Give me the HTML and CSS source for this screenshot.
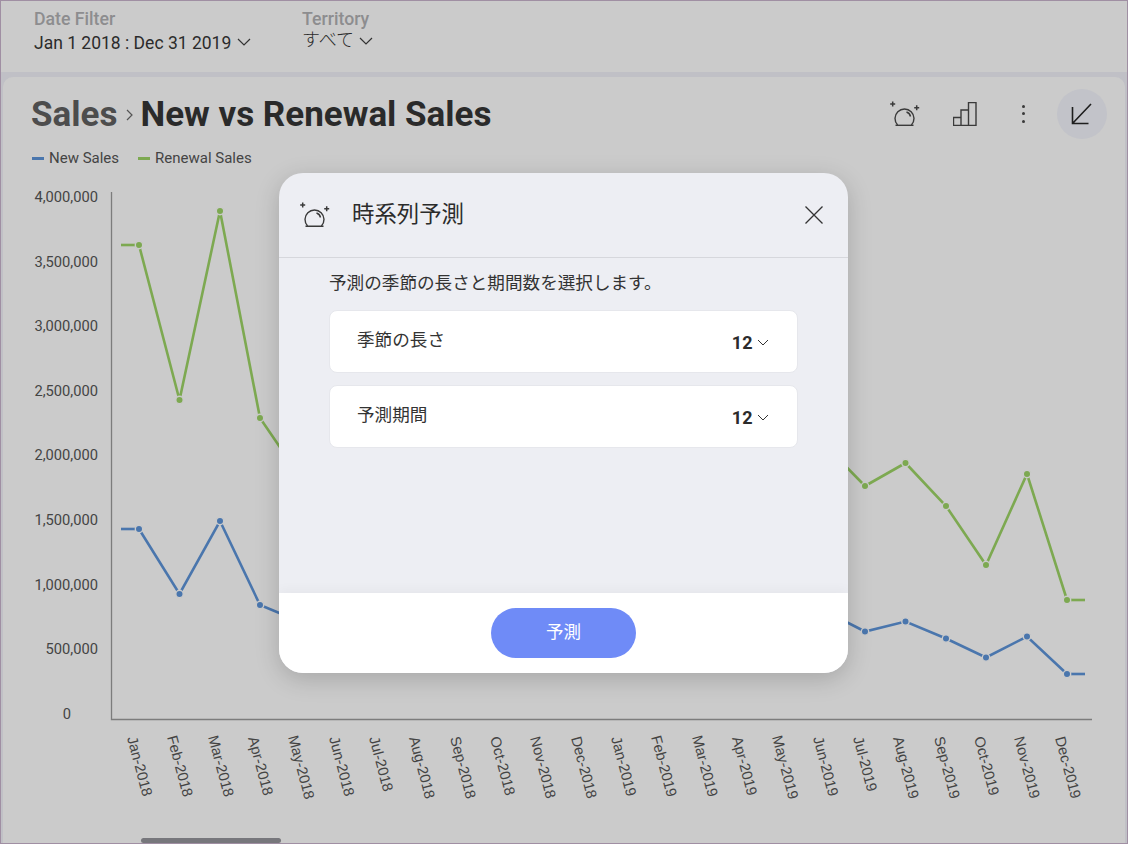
FILE: index.html
```html
<!DOCTYPE html>
<html lang="ja">
<head>
  <meta charset="UTF-8" />
  <title>New vs Renewal Sales</title>
  <link rel="stylesheet" href="styles.css">
</head>
<body>
  <div class="app">
    <div class="filters">
      <div class="filter filter-date">
        <div class="filter-label">Date Filter</div>
        <div class="filter-value">Jan 1 2018 : Dec 31 2019
          <svg class="chev" width="14" height="8" viewBox="0 0 14 8"><path d="M1 1l6 6 6-6"/></svg>
        </div>
      </div>
      <div class="filter">
        <div class="filter-label">Territory</div>
        <div class="filter-value filter-jp">すべて
          <svg class="chev" width="14" height="8" viewBox="0 0 14 8"><path d="M1 1l6 6 6-6"/></svg>
        </div>
      </div>
    </div>

    <div class="panel">
      <div class="panel-head">
        <div class="crumbs">
          <span class="crumb-parent">Sales</span>
          <svg class="crumb-sep" width="8" height="12" viewBox="0 0 8 12"><path d="M1 1l5 5-5 5"/></svg>
          <span class="crumb-title">New vs Renewal Sales</span>
        </div>
        <div class="actions">
          <svg class="icon icon-forecast" width="30" height="26" viewBox="0 0 30 26">
            <path d="M7.600 24A9.500 9.500 0 1 1 21.400 24"/>
            <path d="M5.500 24.300h18"/>
            <path d="M16.500 11a6 6 0 0 1 4 4.500"/>
            <path class="spark" d="M2.700 .5v5M.2 3h5M26.700 4.200v5M24.200 6.700h5"/>
          </svg>
          <svg class="icon icon-bars" width="24" height="24" viewBox="0 0 24 24">
            <path d="M.5 23.500v-8h7.500v8zM8 23.500v-15.500h7.500v15.500zM15.500 23.500v-23h7.500v23z"/>
          </svg>
          <div class="kebab"><i></i><i></i><i></i></div>
          <div class="collapse">
            <svg class="icon" width="22" height="22" viewBox="0 0 22 22">
              <path d="M20 1L1.500 20.500M1.500 4v16.500h16"/>
            </svg>
          </div>
        </div>
      </div>

      <div class="legend">
        <span class="legend-item"><i class="swatch swatch-blue"></i>New Sales</span>
        <span class="legend-item"><i class="swatch swatch-green"></i>Renewal Sales</span>
      </div>

      <svg class="chart" width="1122" height="662" viewBox="3 180 1122 662">
        <g class="y-labels">
          <text x="98" y="202">4,000,000</text>
          <text x="98" y="266.500">3,500,000</text>
          <text x="98" y="331">3,000,000</text>
          <text x="98" y="395.500">2,500,000</text>
          <text x="98" y="460">2,000,000</text>
          <text x="98" y="525">1,500,000</text>
          <text x="98" y="589.500">1,000,000</text>
          <text x="98" y="654">500,000</text>
          <text x="71" y="719">0</text>
        </g>
        <path class="axis" d="M111.500 192V719.500H1092"/>

        <path class="line green" d="M121 245h14"/>
        <path class="line green" d="M139 245L179.500 400L220 211L260 418L301 478L341 500L381 520L422 510L462 530L502 500L542 520L583 510L623 500L663 490L704 480L744 470L784 460L825 445L865 486L905.500 463L946 506L986 565L1027 474L1067 600"/>
        <path class="line green" d="M1071 600h14"/>
        <g class="dots green-dots">
          <circle cx="139" cy="245" r="3.700"/><circle cx="179.500" cy="400" r="3.700"/><circle cx="220" cy="211" r="3.700"/><circle cx="260" cy="418" r="3.700"/>
          <circle cx="865" cy="486" r="3.700"/><circle cx="905.500" cy="463" r="3.700"/><circle cx="946" cy="506" r="3.700"/><circle cx="986" cy="565" r="3.700"/><circle cx="1027" cy="474" r="3.700"/><circle cx="1067" cy="600" r="3.700"/>
        </g>

        <path class="line blue" d="M121 529h14"/>
        <path class="line blue" d="M139 529L179.500 594L220 521L260 605L301 622L341 640L381 650L825 611L865 631.500L905.500 621.500L946 638.500L986 657.500L1027 636.500L1067 674"/>
        <path class="line blue" d="M1071 674h14"/>
        <g class="dots blue-dots">
          <circle cx="139" cy="529" r="3.700"/><circle cx="179.500" cy="594" r="3.700"/><circle cx="220" cy="521" r="3.700"/><circle cx="260" cy="605" r="3.700"/>
          <circle cx="865" cy="631.500" r="3.700"/><circle cx="905.500" cy="621.500" r="3.700"/><circle cx="946" cy="638.500" r="3.700"/><circle cx="986" cy="657.500" r="3.700"/><circle cx="1027" cy="636.500" r="3.700"/><circle cx="1067" cy="674" r="3.700"/>
        </g>

        <g class="x-labels">
          <text transform="translate(127 738) rotate(75)">Jan-2018</text>
          <text transform="translate(167 737) rotate(75)">Feb-2018</text>
          <text transform="translate(208 737) rotate(75)">Mar-2018</text>
          <text transform="translate(248 738) rotate(75)">Apr-2018</text>
          <text transform="translate(288 737) rotate(75)">May-2018</text>
          <text transform="translate(329 738) rotate(75)">Jun-2018</text>
          <text transform="translate(369 738) rotate(75)">Jul-2018</text>
          <text transform="translate(409 738) rotate(75)">Aug-2018</text>
          <text transform="translate(450 738) rotate(75)">Sep-2018</text>
          <text transform="translate(490 738) rotate(75)">Oct-2018</text>
          <text transform="translate(530 738) rotate(75)">Nov-2018</text>
          <text transform="translate(571 738) rotate(75)">Dec-2018</text>
          <text transform="translate(611 738) rotate(75)">Jan-2019</text>
          <text transform="translate(651 737) rotate(75)">Feb-2019</text>
          <text transform="translate(692 737) rotate(75)">Mar-2019</text>
          <text transform="translate(732 738) rotate(75)">Apr-2019</text>
          <text transform="translate(772 737) rotate(75)">May-2019</text>
          <text transform="translate(813 738) rotate(75)">Jun-2019</text>
          <text transform="translate(853 738) rotate(75)">Jul-2019</text>
          <text transform="translate(893 738) rotate(75)">Aug-2019</text>
          <text transform="translate(934 738) rotate(75)">Sep-2019</text>
          <text transform="translate(974 738) rotate(75)">Oct-2019</text>
          <text transform="translate(1014 738) rotate(75)">Nov-2019</text>
          <text transform="translate(1055 738) rotate(75)">Dec-2019</text>
        </g>
      </svg>

      <div class="scrollbar"></div>
    </div>
  </div>

  <div class="modal">
    <div class="modal-head">
      <svg class="icon icon-forecast" width="30" height="26" viewBox="0 0 30 26">
        <path d="M7.600 24A9.500 9.500 0 1 1 21.400 24"/>
        <path d="M5.500 24.300h18"/>
        <path d="M16.500 11a6 6 0 0 1 4 4.500"/>
        <path class="spark" d="M2.700 .5v5M.2 3h5M26.700 4.200v5M24.200 6.700h5"/>
      </svg>
      <div class="modal-title">時系列予測</div>
      <svg class="close" width="20" height="20" viewBox="0 0 20 20"><path d="M1.500 1.500l17 17M18.500 1.500l-17 17"/></svg>
    </div>
    <div class="modal-body">
      <p class="modal-text">予測の季節の長さと期間数を選択します。</p>
      <div class="option">
        <span class="option-name">季節の長さ</span>
        <span class="option-value">12
          <svg class="chev" width="12" height="7" viewBox="0 0 12 7"><path d="M1 1l5 5 5-5"/></svg>
        </span>
      </div>
      <div class="option">
        <span class="option-name">予測期間</span>
        <span class="option-value">12
          <svg class="chev" width="12" height="7" viewBox="0 0 12 7"><path d="M1 1l5 5 5-5"/></svg>
        </span>
      </div>
    </div>
    <div class="modal-foot">
      <button class="run-btn">予測</button>
    </div>
  </div>
</body>
</html>
```

FILE: styles.css
```css
* { box-sizing: border-box; }
body { margin: 0; font-family: Roboto, "Noto Sans CJK JP", sans-serif; background: #cbcbcb; color: #2b2b2b; overflow: hidden; }

.app { width: 1128px; height: 844px; display: flex; flex-direction: column; background: #c0c0c6; border: 1px solid #a08fa3; }

.filters { height: 71px; flex: none; display: flex; padding: 9px 0 0 33px; background: #cbcbcb; }
.filter-date { width: 268px; }
.filter-label { font-size: 17.700px; font-weight: 500; line-height: 18px; color: #8d8d8f; }
.filter-value { font-size: 17.500px; line-height: 24px; margin-top: 3px; color: #2b2b2b; white-space: nowrap; }
.filter-jp { font-size: 18px; font-weight: 300; margin-top: 0; }
.chev { fill: none; stroke: #333; stroke-width: 1.2; vertical-align: 3px; margin-left: 1px; }
.filter-jp .chev { vertical-align: 1px; }

.panel { position: relative; flex: 1; margin: 5px 2px 0; background: #cbcbcb; border-radius: 10px 10px 0 0; }
.panel-head { height: 73px; display: flex; justify-content: space-between; align-items: center; padding: 0 18px 0 28px; }
.crumbs { display: flex; align-items: center; margin-top: 2px; font-size: 35px; font-weight: 700; white-space: nowrap; }
.crumb-parent { color: #4d4d4d; }
.crumb-sep { margin: 1px 6px 0 9px; fill: none; stroke: #555; stroke-width: 1.2; }
.crumb-title { color: #2a2a2a; }

.actions { display: flex; align-items: center; }
.icon { display: block; fill: none; stroke: #3a3a3a; stroke-width: 1.4; }
.icon-forecast .spark { stroke-width: 1.5; }
.icon-bars { margin-left: 33px; }
.kebab { margin-left: 44.500px; display: flex; flex-direction: column; gap: 4.500px; }
.kebab i { display: block; width: 3px; height: 3px; border-radius: 50%; background: #3a3a3a; }
.collapse { width: 50px; height: 50px; margin-left: 32.500px; border-radius: 50%; background: #c2c3c9; display: flex; align-items: center; justify-content: center; }
.collapse .icon { stroke: #1e1e1e; stroke-width: 1.6; }

.legend { display: flex; gap: 19px; padding-left: 29px; height: 30px; font-size: 15px; line-height: 16px; color: #444; }
.legend-item { display: flex; align-items: center; height: 16px; }
.swatch { width: 12px; height: 3px; margin-right: 5px; }
.swatch-blue { background: #4a76ad; }
.swatch-green { background: #7da951; }

.chart { display: block; }
.y-labels text { font: 14.700px Roboto, sans-serif; fill: #444; text-anchor: end; }
.x-labels text { font: 14.700px "Liberation Sans", sans-serif; fill: #444; }
.axis { fill: none; stroke: #7c7c7c; stroke-width: 1.3; }
.line { fill: none; stroke-width: 2.600; stroke-linejoin: miter; }
.green { stroke: #7da951; }
.blue { stroke: #4a76ad; }
.dots circle { stroke: #cbcbcb; stroke-width: 1.4; }
.green-dots circle { fill: #7da951; }
.blue-dots circle { fill: #4a76ad; }

.scrollbar { position: absolute; left: 138px; bottom: 0; width: 140px; height: 5px; border-radius: 3px; background: #77777c; }

.modal { position: absolute; left: 279px; top: 173px; width: 569px; height: 500px; display: flex; flex-direction: column; background: #edeef3; border-radius: 24px; overflow: hidden; box-shadow: 0 6px 24px rgba(0, 0, 0, 0.18); }
.modal-head { height: 85px; flex: none; display: flex; align-items: center; padding: 0 24px 0 21px; border-bottom: 1px solid #d6d7dc; }
.modal-title { flex: 1; margin: -6px 0 0 22px; font-size: 22.400px; font-weight: 400; color: #2b2b2b; }
.close { fill: none; stroke: #333; stroke-width: 1.3; }
.modal-body { flex: 1; padding: 14px 50px 0; }
.modal-text { margin: 0 0 16px; font-size: 17.600px; line-height: 22px; font-weight: 400; color: #333; }
.option { height: 63px; margin-bottom: 12px; padding: 0 28px 0 27px; display: flex; justify-content: space-between; align-items: center; background: #fff; border: 1px solid #e6e7ec; border-radius: 8px; }
.option-name { font-size: 17.600px; color: #333; margin-top: -6px; }
.option-value { font-size: 18px; font-weight: 700; color: #2b2b2b; white-space: nowrap; margin-top: 2px; }
.option-value .chev { stroke-width: 1; margin-left: 0; vertical-align: 3px; }
.modal-foot { height: 80px; flex: none; display: flex; align-items: center; justify-content: center; background: #fff; box-shadow: 0 -4px 10px rgba(0, 0, 0, 0.03); }
.run-btn { width: 145px; height: 50px; padding: 0 0 6px; border: 0; border-radius: 25px; background: #6f8bf7; color: #fff; font-family: inherit; font-size: 17.500px; }
```
